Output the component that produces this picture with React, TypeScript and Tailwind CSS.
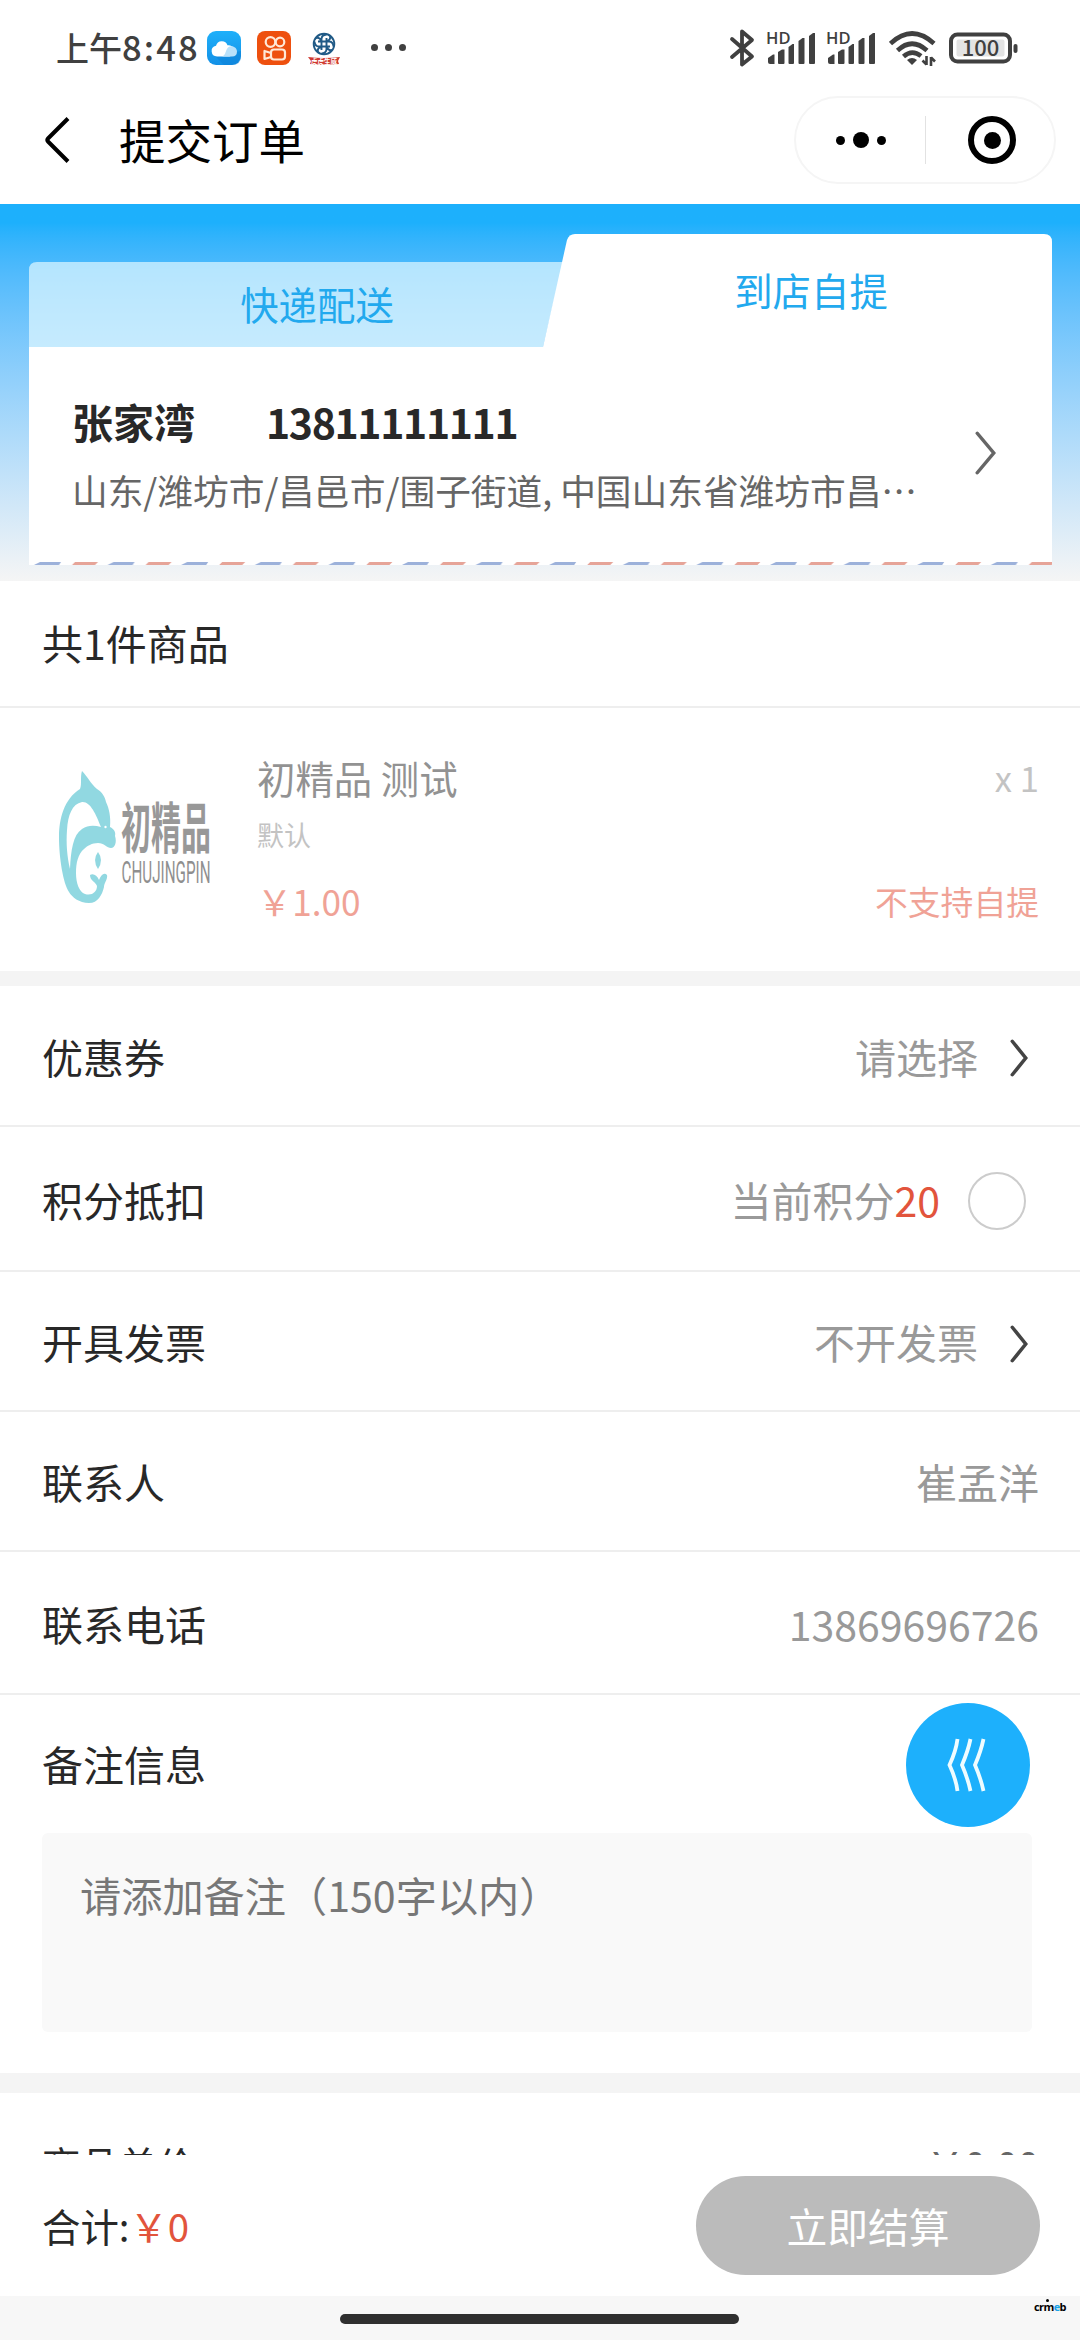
import clsx from "clsx";

const ROWS_LINE = "border-b-2 border-[#eeeeee]";

function Arrow({ className, w, h, stroke }: { className?: string; w: number; h: number; stroke: number }) {
  return (
    <svg width={w} height={h} className={className} fill="none" stroke="currentColor" strokeWidth={stroke} strokeLinecap="round">
      <path d={`M${stroke / 2 + 0.5} ${stroke / 2 + 0.5}L${w - stroke / 2 - 0.5} ${h / 2}L${stroke / 2 + 0.5} ${h - stroke / 2 - 0.5}`} />
    </svg>
  );
}

function Signal() {
  return (
    <svg width="52" height="36" viewBox="0 0 52 36" className="overflow-visible text-[#404040]" fill="currentColor">
      <text x="0" y="14" fontSize="16.500" fontWeight="600" fontFamily="'Open Sans', sans-serif">HD</text>
      <path d="M2 32v-4l5-3.500h1.500V34H4q-2 0-2-2z" />
      <path d="M12 22l4-2.500h2.500V33q0 1-1 1H13q-1 0-1-1z" />
      <path d="M22.500 17l4-3h1.500V33q0 1-1 1h-3.500q-1 0-1-1z" />
      <path d="M32.500 11l4-3h2V33q0 1-1 1h-4q-1 0-1-1z" />
      <path d="M43 6l4-3h2V33q0 1-1 1h-4q-1 0-1-1z" />
    </svg>
  );
}

function StatusBar() {
  return (
    <div className="flex h-[95px] items-center pl-[56px] pr-[61px]">
      <span className="w-[151px] whitespace-nowrap pb-[2px] text-[33px] font-medium leading-[48px] text-[#404040]">
        上午<span className="text-[34.500px] tracking-[2.100px]">8:48</span>
      </span>
      {/* weather */}
      <svg width="34" height="34" viewBox="0 0 34 34" className="shrink-0">
        <defs>
          <linearGradient id="sky" x1="0" y1="0" x2="0" y2="1">
            <stop offset="0" stopColor="#1fb0fa" />
            <stop offset="1" stopColor="#1390e6" />
          </linearGradient>
        </defs>
        <rect width="34" height="34" rx="9" fill="url(#sky)" />
        <path d="M8 25l9 9h8q9 0 9-9v-5z" fill="#0b7fd6" opacity=".5" />
        <path d="M10 25.500a5.400 5.400 0 0 1-1-10.700a6 6 0 0 1 11.500-.5a5.500 5.500 0 0 1 2 11.200z" fill="#fff" />
        <path d="M14 25.500c5 0 4-6 7-9c4-3 9 0 9 4q0 5-5 5z" fill="#b9e1fa" />
      </svg>
      {/* video */}
      <svg width="34" height="34" viewBox="0 0 34 34" className="ml-4 shrink-0" fill="none" stroke="#ffe9d8" strokeWidth="2.200">
        <rect width="34" height="34" rx="8" fill="#ee500f" stroke="none" />
        <circle cx="13.500" cy="11" r="4.800" />
        <circle cx="23" cy="11" r="4.300" />
        <rect x="14" y="18.500" width="14" height="10" rx="3" />
        <path d="M14 22l-6.500-2v8l6.500-2" strokeLinejoin="round" />
      </svg>
      {/* bank */}
      <svg width="34" height="34" viewBox="0 0 34 34" className="ml-4 shrink-0 overflow-visible" fill="none" stroke="#205a86" strokeWidth="1.900">
        <circle cx="17" cy="13" r="10.300" />
        <path d="M14.500 19V8q0-4 5-4.500M19.500 7v11q0 4-5 4.500M11 10.500h11q4 0 4.500 5M23 15.500H12q-4 0-4.500-5M9 7q4-1 5 3M25 19q-4 1-5-3M11 21q-1-4 3-5M23 5q1 4-3 5" />
        <path d="M1 26q16 2 32 0l-2 4l1 3q-15 2-29 0l1-3z" fill="#cf3a31" stroke="none" />
        <text x="17" y="32.700" fontSize="6.500" fontWeight="700" textAnchor="middle" fill="#fff" stroke="none">虎虎生威</text>
      </svg>
      <div className="ml-[30px] flex gap-[7px]">
        <i className="size-[7px] rounded-full bg-[#404040]" />
        <i className="size-[7px] rounded-full bg-[#404040]" />
        <i className="size-[7px] rounded-full bg-[#404040]" />
      </div>

      <svg width="26" height="40" viewBox="0 0 26 40" className="ml-auto shrink-0" fill="none" stroke="#404040" strokeWidth="3.800" strokeLinejoin="round" strokeLinecap="round">
        <path d="M3 11L23 28.500L13 36.500V3.500L23 12L3 29" />
      </svg>
      <div className="ml-[11px] flex gap-[8px]">
        <Signal />
        <Signal />
      </div>
      <svg width="47" height="36" viewBox="0 0 47 36" className="ml-[11px] shrink-0" fill="none" stroke="#404040" strokeWidth="4.600">
        <path d="M1.500 13.500Q23 -6.500 45 13.500" />
        <path d="M8.500 20.500Q23 7 38 20.500" />
        <path d="M14.500 26.500Q23 19 32 26" />
        <path d="M18 30q5-4 10 0l-5 5z" fill="#404040" stroke="none" />
        <path d="M37.500 26v9M37.500 34.500l-4-4M42 36v-9M42 27.500l4 4" strokeWidth="2.600" />
      </svg>
      <svg width="70" height="32" viewBox="0 0 70 32" className="ml-[13px] shrink-0 overflow-visible">
        <rect x="2" y="2.500" width="59" height="27" rx="6.500" fill="none" stroke="#404040" strokeWidth="4" />
        <rect x="7.500" y="7.500" width="48" height="17" rx="2" fill="#e3e3e3" />
        <rect x="64.500" y="12" width="4" height="9" rx="2" fill="#404040" />
        <text x="31.500" y="24" fontSize="22" fontWeight="500" textAnchor="middle" fill="#404040">100</text>
      </svg>
    </div>
  );
}

function NavBar() {
  return (
    <div className="flex h-[109px] items-start pl-[45px] pr-[24px]">
      <svg width="26" height="48" viewBox="0 0 26 48" className="mt-[21px]" fill="none" stroke="#000" strokeWidth="4">
        <path d="M23 2.500L3 22.500q-1.500 1.500 0 3L23 45.500" />
      </svg>
      <h1 className="ml-[48px] mt-[21px] text-[46.500px] leading-[46px] text-black">提交订单</h1>
      <div className="ml-auto mt-px flex h-[88px] w-[262px] items-center rounded-full border-2 border-[#f5f5f5]">
        <div className="flex w-1/2 items-center justify-center gap-[8px]">
          <i className="size-[9px] rounded-full bg-black" />
          <i className="size-[16px] rounded-full bg-black" />
          <i className="size-[9px] rounded-full bg-black" />
        </div>
        <div className="h-[48px] w-px bg-[#e2e2e2]" />
        <div className="flex flex-1 justify-center pl-[4px]">
          <div className="flex size-[48px] items-center justify-center rounded-full border-[6px] border-black">
            <i className="size-[17px] rounded-full bg-black" />
          </div>
        </div>
      </div>
    </div>
  );
}

function Delivery() {
  return (
    <section className="h-[377px] bg-linear-to-b from-[#1db0fc] from-5% to-[#f5f5f5] px-[29px] pt-[30px]">
      <div className="relative h-[113px]">
        <svg width="1023" height="113" viewBox="0 0 1023 113" className="absolute inset-0">
          <path d="M0 113V36Q0 28 8 28H534L514 113z" fill="#e8fbff" fillOpacity=".68" />
          <path d="M514 113L538 6Q540 0 546 0H1015Q1023 0 1023 8V113z" fill="#fff" />
        </svg>
        <div className="relative flex text-[38.400px] leading-[56px] text-[#22a9ee]">
          <div className="w-[576px] pt-[41px] text-center">快递配送</div>
          <div className="w-[412px] pt-[27px] text-center">到店自提</div>
        </div>
      </div>
      <div className="flex h-[215px] w-[1023px] justify-between bg-white pl-[43px] pr-[56px]">
        <div className="pt-[44px]">
          <div className="flex gap-[71px] text-[41px] font-bold leading-[60px] text-[#282828]">
            <span>张家湾</span>
            <span className="tracking-[-1.350px]">13811111111</span>
          </div>
          <p className="whitespace-nowrap pt-[13px] text-[35.700px] leading-[52px] text-[#666]">山东/潍坊市/昌邑市/围子街道, 中国山东省潍坊市昌⋯</p>
        </div>
        <Arrow w={21} h={44} stroke={3.5} className="mt-[84px] text-[#666]" />
      </div>
      <svg width="1023" height="3" className="block">
        <defs>
          <pattern id="airmail" width="73.600" height="3" patternUnits="userSpaceOnUse">
            <rect width="73.600" height="3" fill="#fff" />
            <path d="M5 3L11 0H32L30 3z" fill="#9cb1da" />
            <path d="M43 3L46 0H69L66 3z" fill="#e6a498" />
          </pattern>
        </defs>
        <rect width="1023" height="3" fill="url(#airmail)" />
      </svg>
    </section>
  );
}

function Goods() {
  return (
    <section className="h-[390px] bg-white">
      <div className={clsx("flex h-[127px] items-center px-[42px] pb-px text-[41px]", ROWS_LINE)}>共1件商品</div>
      <div className="flex pl-[42px] pr-[41px] pt-[37px] opacity-50">
        <svg width="187" height="187" viewBox="0 0 187 187" className="shrink-0 overflow-visible">
          <path
            d="M40 26C45 31 49 39 55 44C60 47 63 52 64 57C67 63 69 72 68 82C72 84 74 87 73 91C75 97 73 103 69 103C65 103 62 98 56 98C50 98 45 101 42 104C36 109 34 118 34 128C34 138 37 147 43 149C50 151 55 147 55 141C54 137 48 136 48 130C51 128 55 130 57 135C59 130 62 127 65 130C66 134 62 138 62 142C60 150 56 158 47 158C37 158 30 152 27 147C21 138 17 112 17 92C17 74 22 54 38 44C40 39 38 32 40 26zM28 124C29 105 31 90 40 84C46 80 52 80 59 82C54 69 48 56 40 57C30 59 26 70 25 85C24 98 25 112 28 124z"
            fill="#26b2c4"
            fillRule="evenodd"
          />
          <path d="M56 107q-6 8 0 17q6-9 0-17z" fill="#26b2c4" />
          <circle cx="63.500" cy="82" r="1.200" fill="#fff" />
          <text x="79" y="103.500" fontSize="30" fontWeight="700" fill="#333" transform="translate(0 -86) scale(1 1.830)">初精品</text>
          <text x="79.500" y="137.500" fontSize="31" fontFamily="Roboto, sans-serif" fill="#222" textLength="89" lengthAdjust="spacingAndGlyphs">CHUJINGPIN</text>
        </svg>
        <div className="ml-[28px] flex flex-1 flex-col">
          <div className="flex justify-between pt-[4px]">
            <span className="text-[38.400px] leading-[56px]">初精品 测试</span>
            <span className="text-[34.600px] leading-[56px] text-[#888]">x 1</span>
          </div>
          <span className="pt-[10px] text-[27px] leading-[40px] text-[#888]">默认</span>
          <div className="flex items-center justify-between pt-[21px] leading-[50px] text-[#e2482f]">
            <span className="text-[35.200px]">￥1.00</span>
            <span className="text-[32.800px]">不支持自提</span>
          </div>
        </div>
      </div>
    </section>
  );
}

function Row({ label, h, children }: { label: string; h: string; children: React.ReactNode }) {
  return (
    <div className={clsx("flex items-center justify-between bg-white pl-[42px] pr-[41px] pt-[2px] text-[41px]", h, ROWS_LINE)}>
      <span>{label}</span>
      <div className="flex items-center text-[#999]">{children}</div>
    </div>
  );
}

export default function App() {
  return (
    <main className="flex h-[2340px] w-[1080px] flex-col overflow-hidden bg-[#f4f4f4] font-['Noto_Sans_CJK_SC',sans-serif] text-[#282828]">
      <div className="h-[204px] bg-white">
        <StatusBar />
        <NavBar />
      </div>
      <Delivery />
      <Goods />

      <section className="mt-[15px]">
        <Row label="优惠券" h="h-[141px]">
          请选择
          <Arrow w={18} h={38} stroke={3.5} className="ml-[32px] mr-[11px] mt-[3px] text-[#444]" />
        </Row>
        <Row label="积分抵扣" h="h-[145px]">
          当前积分<span className="text-[#e2543c]">20</span>
          <span className="ml-[28px] mr-[13px] mt-[3px] size-[58px] rounded-full border-2 border-[#ccc]" />
        </Row>
        <Row label="开具发票" h="h-[140px]">
          不开发票
          <Arrow w={18} h={38} stroke={3.5} className="ml-[32px] mr-[11px] mt-[3px] text-[#444]" />
        </Row>
        <Row label="联系人" h="h-[140px]">崔孟洋</Row>
        <Row label="联系电话" h="h-[143px]">13869696726</Row>
        <div className="h-[378px] bg-white pl-[42px] pr-[48px] pt-[8px]">
          <div className="flex h-[124px] items-center justify-between text-[41px]">
            <span className="pb-[2px]">备注信息</span>
            <button className="mr-[2px] flex size-[124px] items-center justify-center rounded-full bg-[#1db0fc]">
              <svg width="42" height="58" viewBox="0 0 42 58" className="mr-[5px]" fill="none" stroke="#effcff" strokeWidth="3.800">
                <path d="M12.500 3Q11 15 4.500 29Q11 43 12.500 55M25.500 3Q23 15 17 29Q23 43 25.500 55M38.500 3Q36 15 30 29Q36 43 38.500 55" />
              </svg>
            </button>
          </div>
          <div className="mt-[6px] h-[199px] rounded-md bg-[#f9f9f9] pl-[38px] pt-[31px] text-[41.200px] leading-[60px] text-[#777]">
            请添加备注（150字以内）
          </div>
        </div>
      </section>

      {/* price list continues under the footer */}
      <div className="mt-[20px] flex h-[62px] items-start justify-between overflow-hidden bg-white pl-[42px] pr-[41px] pt-[42px] text-[38.400px] leading-[56px]">
        <span>商品单价<span className="ml-[3px]">:</span></span>
        <span className="text-[#666]">￥0.00</span>
      </div>

      <div className="flex h-[141px] items-center justify-between bg-white pl-[42px] pr-[40px]">
        <p className="text-[38.400px]">合计:<span className="text-[#e2543c]">￥0</span></p>
        <button className="h-[99px] w-[344px] rounded-full bg-[#bbb] text-[40.800px] text-white">立即结算</button>
      </div>
      <div className="flex flex-1 bg-[#f7f7f7] pl-[340px]">
        <div className="mt-[18px] h-[10px] w-[399px] rounded-full bg-[#2f2f2f]" />
        <span className="ml-[295px] mt-[5px] font-['Open_Sans',sans-serif] text-[11px] font-bold leading-[12px] tracking-[-0.600px] text-black">
          cr<span className="relative">m<i className="absolute left-[3px] top-0 size-[3px] rounded-full bg-black" /></span><span className="text-[#1aa3e8]">e</span>b
        </span>
      </div>
    </main>
  );
}
